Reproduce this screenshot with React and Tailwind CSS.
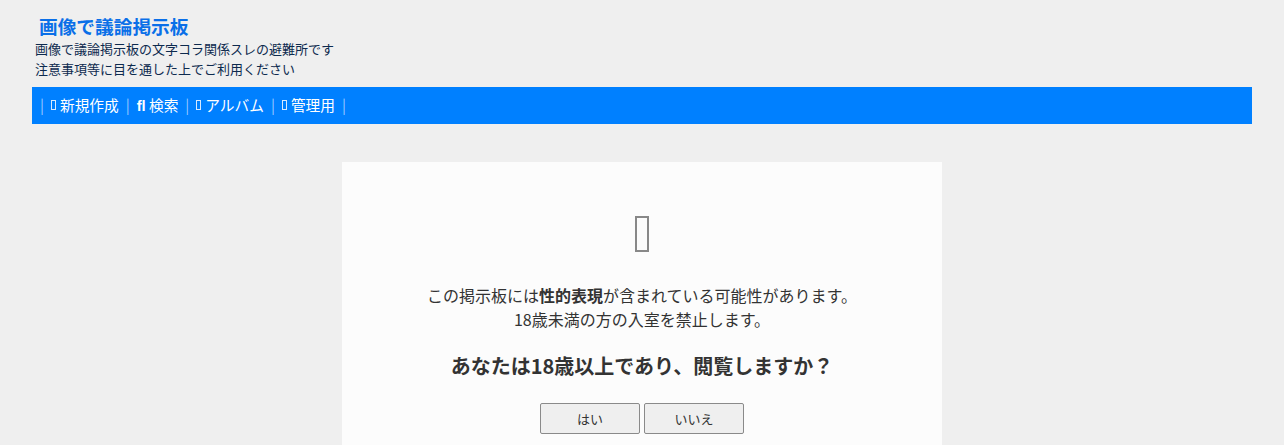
function Tofu() {
  return <span className="mr-[4px] inline-block h-[10px] w-[5px] border border-[#d8e9ff] align-[-1px]" />;
}

export default function App() {
  const font = { fontFamily: '"Noto Sans CJK JP", "Noto Sans", sans-serif' };
  return (
    <div className="min-h-[445px] bg-[#efefef] px-8 pt-[13px]" style={font}>
      <div className="pl-[7px] text-[18.7px] font-bold leading-[26px] text-[#0a6fe8]">画像で議論掲示板</div>
      <div className="pl-[3px] text-[13px] leading-[20px] text-[#0d2a4e]">
        <div>画像で議論掲示板の文字コラ関係スレの避難所です</div>
        <div>注意事項等に目を通した上でご利用ください</div>
      </div>
      <div className="mt-[8px] flex h-[37px] items-center bg-[#0080ff] pl-[8px] text-[14.7px] text-white">
        <span className="text-[#9cc8ff]">|</span>
        <span className="flex items-center px-[7px]"><Tofu />新規作成</span>
        <span className="text-[#9cc8ff]">|</span>
        <span className="px-[7px]"><span className="font-bold" style={{ fontFamily: '"Liberation Sans", sans-serif' }}>fl</span> 検索</span>
        <span className="text-[#9cc8ff]">|</span>
        <span className="flex items-center px-[7px]"><Tofu />アルバム</span>
        <span className="text-[#9cc8ff]">|</span>
        <span className="flex items-center px-[7px]"><Tofu />管理用</span>
        <span className="text-[#9cc8ff]">|</span>
      </div>
      <div className="mt-[38px] flex justify-center">
        <div className="h-[300px] w-[600px] bg-[#fcfcfc] pt-[54px] text-center text-[#333]">
          <div className="flex justify-center">
            <div className="h-[36px] w-[14px] border-2 border-[#888]" />
          </div>
          <div className="mt-[31px] text-[16px] leading-[24px]">
            <div>この掲示板には<b>性的表現</b>が含まれている可能性があります。</div>
            <div>18歳未満の方の入室を禁止します。</div>
          </div>
          <div className="mt-[21px] text-[20px] font-bold leading-[28px]">あなたは18歳以上であり、閲覧しますか？</div>
          <div className="mt-[23px] flex justify-center gap-[4px]">
            <button className="h-[31px] w-[100px] rounded-[2px] border border-[#8a8a8a] bg-[#efefef] text-[13px] text-[#333]">はい</button>
            <button className="h-[31px] w-[100px] rounded-[2px] border border-[#8a8a8a] bg-[#efefef] text-[13px] text-[#333]">いいえ</button>
          </div>
        </div>
      </div>
    </div>
  );
}
